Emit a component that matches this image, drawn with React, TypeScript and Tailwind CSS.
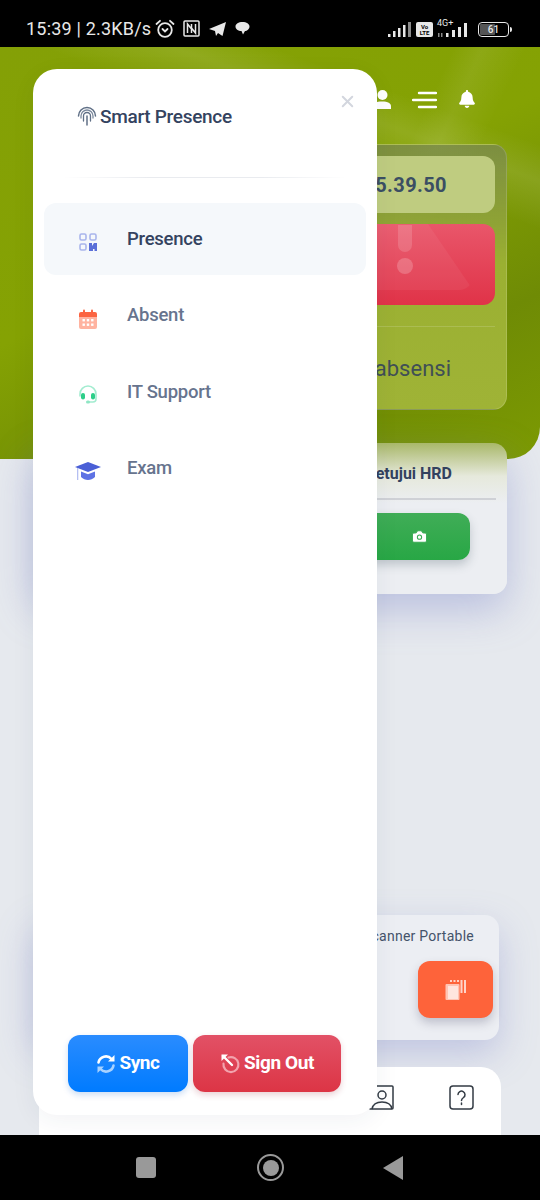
import { Camera, X } from "lucide-react";
import { FaBell } from "react-icons/fa";

const menu = [
  { title: "Presence", icon: PresenceIcon, active: true },
  { title: "Absent", icon: CalendarIcon },
  { title: "IT Support", icon: HeadsetIcon },
  { title: "Exam", icon: CapIcon },
];

function PresenceIcon() {
  return (
    <svg width="18" height="18" viewBox="0 0 18 18">
      <g fill="none" stroke="#a9b5ec" strokeWidth="1.6">
        <rect x="1" y="1" width="6" height="6" rx="1.5" />
        <rect x="11" y="1" width="6" height="6" rx="1.5" />
        <rect x="1" y="11" width="6" height="6" rx="1.5" />
      </g>
      <path d="M10 10h3v3l2-3h3v8h-2.5v-2H14v2h-4z" fill="#5a6fd8" />
    </svg>
  );
}

function CalendarIcon() {
  return (
    <svg width="18" height="20" viewBox="0 0 18 20">
      <path d="M0 8h18v10a2 2 0 0 1-2 2H2a2 2 0 0 1-2-2z" fill="#ffb3a0" />
      <path d="M2 3h14a2 2 0 0 1 2 2v3H0V5a2 2 0 0 1 2-2z" fill="#fb6340" />
      <rect x="4" y="0.5" width="2" height="4" rx="1" fill="#fb6340" />
      <rect x="12" y="0.5" width="2" height="4" rx="1" fill="#fb6340" />
      <g fill="#fff">
        <rect x="3.5" y="10" width="2.4" height="2.4" />
        <rect x="7.8" y="10" width="2.4" height="2.4" />
        <rect x="12.1" y="10" width="2.4" height="2.4" />
        <rect x="3.5" y="14.5" width="2.4" height="2.4" />
        <rect x="7.8" y="14.5" width="2.4" height="2.4" />
        <rect x="12.1" y="14.5" width="2.4" height="2.4" />
      </g>
    </svg>
  );
}

function HeadsetIcon() {
  return (
    <svg width="20" height="20" viewBox="0 0 20 20" fill="none">
      <path d="M2 11V9a8 8 0 0 1 16 0v5a3 3 0 0 1-3 3h-4" stroke="#a3ecd0" strokeWidth="1.6" strokeLinecap="round" />
      <rect x="3" y="8" width="4" height="6.5" rx="2" fill="#2dce89" />
      <rect x="13" y="8" width="4" height="6.5" rx="2" fill="#2dce89" />
      <rect x="8" y="15.5" width="4" height="3" rx="1.5" fill="#8fe6c4" />
    </svg>
  );
}

function CapIcon() {
  return (
    <svg width="26" height="20" viewBox="0 0 26 20">
      <path d="M13 0l13 5-13 5L0 5z" fill="#4a5fd6" />
      <path d="M6 9.5l7 2.8 7-2.8V15c-2 2-4.5 3-7 3s-5-1-7-3z" fill="#5e72e4" />
      <rect x="2" y="6" width="1.3" height="12" fill="#b5bff2" />
    </svg>
  );
}

function FingerprintIcon() {
  return (
    <svg width="20" height="20" viewBox="0 0 20 20" fill="none" stroke="#5f6f86" strokeLinecap="round">
      <path d="M1.5 10a8.5 8.5 0 0 1 17 0" strokeWidth="1.5" />
      <path d="M4 12V10a6 6 0 0 1 12 0v2" strokeWidth="1.3" stroke="#7c8a9e" />
      <path d="M6.5 15v-5a3.5 3.5 0 0 1 7 0v5" strokeWidth="1.3" />
      <path d="M10 19v-9" strokeWidth="1.5" />
    </svg>
  );
}

function SyncIcon() {
  return (
    <svg width="20" height="20" viewBox="0 0 20 20" fill="none" strokeWidth="2.6" strokeLinecap="round">
      <path d="M2.5 8.5A7.5 7.5 0 0 1 15.5 5" stroke="#fff" />
      <path d="M18.5 1v6.5H12z" fill="#fff" />
      <path d="M17.5 11.5A7.5 7.5 0 0 1 4.5 15" stroke="#a8d2ff" />
      <path d="M1.5 19v-6.5H8z" fill="#a8d2ff" />
    </svg>
  );
}

function SignOutIcon() {
  return (
    <svg width="21" height="21" viewBox="0 0 21 21" fill="none">
      <path d="M8.5 4.5a7.5 7.5 0 1 1-5 6" stroke="#f2a3ad" strokeWidth="2.2" strokeLinecap="round" />
      <path d="M12 12L3 3" stroke="#fff" strokeWidth="2.4" strokeLinecap="round" />
      <path d="M1.5 1.5h6.5L1.5 8z" fill="#fff" />
    </svg>
  );
}

function ScanIcon() {
  return (
    <svg width="21" height="21" viewBox="0 0 21 21">
      <rect x="0.5" y="5" width="14" height="16" rx="1" fill="#ffc4b4" />
      <rect x="3" y="7" width="10" height="13" fill="#ffe5de" />
      <g fill="#ffd3c7">
        <rect x="5" y="1" width="2" height="2" />
        <rect x="8.5" y="1" width="2" height="2" />
        <rect x="12" y="1" width="2" height="2" />
        <rect x="15.5" y="1" width="2" height="13" />
        <rect x="19" y="1" width="2" height="13" />
      </g>
    </svg>
  );
}

function StatusBar() {
  return (
    <div className="flex h-[47px] shrink-0 items-center justify-between bg-black pl-[26px] pr-[28px] pt-[10px] text-[#e8e8e8]">
      <div className="flex items-center">
        <span className="text-[18px] leading-none tracking-[0.2px]">15:39 | 2.3KB/s</span>
        <svg className="ml-[4px]" width="20" height="20" viewBox="0 0 20 20" fill="none" stroke="currentColor" strokeWidth="1.8">
          <circle cx="10" cy="11" r="6.8" />
          <path d="M1.5 5L5 1.8M18.5 5L15 1.8M7.5 10l2.5 2.5 2.5-2.5" strokeLinecap="round" />
        </svg>
        <svg className="ml-[8px]" width="17" height="17" viewBox="0 0 17 17" fill="none" stroke="currentColor" strokeWidth="1.5">
          <rect x="1" y="1" width="15" height="15" rx="1" />
          <path d="M4.5 13V4l4 5M12.5 4v9l-4-5M8.5 4v9" />
        </svg>
        <svg className="ml-[9px]" width="17" height="16" viewBox="0 0 17 16" fill="currentColor">
          <path d="M17 1L13.5 15l-4.5-3-2 3-1-5L0 8z" />
        </svg>
        <svg className="ml-[9px]" width="15" height="15" viewBox="0 0 15 15" fill="currentColor">
          <path d="M7.5 1c4 0 7 2 7 4.5S12 10 10 10l-2 3.5L6.5 10C3 10 .5 8 .5 5.5S3.5 1 7.5 1z" />
        </svg>
      </div>
      <div className="flex items-end">
        <svg width="24" height="15" viewBox="0 0 24 15" fill="currentColor">
          <rect x="0" y="12" width="2.5" height="3" />
          <rect x="5" y="9" width="2.5" height="6" />
          <rect x="10" y="6" width="2.5" height="9" />
          <rect x="15" y="3" width="2.5" height="12" />
          <rect x="20" y="0" width="3" height="15" fill="#8a8a8a" />
        </svg>
        <div className="ml-[4px] flex h-[15px] w-[17px] flex-col items-center justify-center rounded-[2px] bg-[#e8e8e8] text-[6px] font-bold leading-[6px] text-black">
          <span>Vo</span>
          <span>LTE</span>
        </div>
        <div className="relative ml-[4px] h-[17px] w-[34px]">
          <span className="absolute left-0 top-[-1px] text-[9px] leading-none">4G+</span>
          <svg className="absolute bottom-0 right-0" width="34" height="15" viewBox="0 0 34 15" fill="currentColor">
            <rect x="9" y="11" width="2.5" height="4" />
            <rect x="15" y="8" width="3" height="7" />
            <rect x="21" y="5" width="3" height="10" />
            <rect x="27" y="1" width="3" height="14" />
            <rect x="1" y="11" width="1.5" height="4" fill="#8a8a8a" />
            <rect x="4" y="11" width="1.5" height="4" fill="#8a8a8a" />
          </svg>
        </div>
        <div className="ml-[7px] flex items-center">
          <div className="relative flex h-[15px] w-[31px] items-center justify-center overflow-hidden rounded-[4px] border-[1.5px] border-[#e8e8e8] text-[10px] font-medium leading-none">
            <span className="absolute inset-y-[1px] left-[1px] w-[15px] rounded-[1px] bg-[#555]" />
            <span className="relative">61</span>
          </div>
          <span className="ml-[1px] h-[5px] w-[2px] rounded-r-sm bg-[#e8e8e8]" />
        </div>
      </div>
    </div>
  );
}

function Background() {
  return (
    <div className="flex flex-1 flex-col overflow-hidden bg-[#e6e9ee]">
      <section className="h-[412px] shrink-0 rounded-br-[32px] bg-[linear-gradient(115deg,transparent_62%,rgba(255,255,255,0.07)_66%,transparent_72%),linear-gradient(20deg,transparent_70%,rgba(255,255,255,0.1)_78%,transparent_84%),linear-gradient(155deg,#84a006_0%,#85a203_45%,#6f8b05_75%,#7c9a02_100%)] pl-[45px] pr-[33px]">
        <div className="flex h-[97px] items-start justify-end gap-[21px] pr-[31px] pt-[43px] text-white">
          <svg width="18" height="19" viewBox="0 0 18 19" fill="#fff">
            <circle cx="9.5" cy="5" r="5" />
            <path d="M0 19v-2.5C0 13 3 11.5 9 11.5s9 1.5 9 5V19z" />
          </svg>
          <svg className="mt-[1px]" width="25" height="18" viewBox="0 0 25 18" stroke="#fff" strokeWidth="2.4" strokeLinecap="round">
            <path d="M7 2h17M1 9h23M7 16h17" />
          </svg>
          <FaBell size={18} />
        </div>
        <div className="rounded-[14px] border border-white/15 bg-[linear-gradient(180deg,rgba(120,135,80,0.75),#9bb032_45%,#9fb336)] px-[11px] pt-[11px]">
          <div className="flex h-[57px] items-center justify-end rounded-[12px] bg-[#bfcc80] pr-[48px] text-[20px] font-bold tracking-[0.4px] text-[#3b4e63]">
            15.39.50
          </div>
          <div className="relative mt-[11px] h-[81px] overflow-hidden rounded-[12px] bg-[linear-gradient(180deg,#e9566a,#e03348)]">
            <div className="absolute right-[22px] top-0 h-[66px] w-[150px] rounded-br-[14px] bg-white/[0.05] [clip-path:polygon(0_0,70%_0,100%_100%,0_100%)]" />
            <div className="absolute right-[83px] top-[1px] h-[27px] w-[14px] rounded-b-full bg-white/15" />
            <div className="absolute right-[82px] top-[34px] h-[16px] w-[16px] rounded-full bg-white/20" />
          </div>
          <div className="mt-[21px] h-px bg-white/15" />
          <div className="flex h-[82px] items-center justify-end pr-[44px] text-[22px] text-[#404f55]">
            Belum absensi
          </div>
        </div>
      </section>

      <section className="relative z-[1] -mt-[16px] ml-[33px] mr-[33px] flex h-[151px] flex-col rounded-[14px] bg-[linear-gradient(180deg,#a9b86a_0%,#e6e9dc_22%,#eceef2_40%,#eceef2_100%)] px-[11px] shadow-[0_16px_40px_rgba(120,130,200,0.4)]">
        <div className="flex h-[57px] items-center justify-end border-b-2 border-[#cfd1d6] pr-[44px] pt-[6px] text-[16px] font-bold text-[#33415f]">
          Disetujui HRD
        </div>
        <div className="mr-[26px] mt-[13px] flex h-[47px] items-center justify-end rounded-[12px] bg-[linear-gradient(180deg,#40ad57,#28a745)] pr-[42px] text-white shadow-[0_5px_10px_rgba(60,80,90,0.25)]">
          <Camera size={17} fill="#fff" stroke="#3aab54" strokeWidth={1.5} />
        </div>
      </section>

      <section className="mt-[321px] ml-[33px] mr-[41px] h-[125px] rounded-[14px] bg-[#eceef3] pr-[6px] shadow-[0_14px_36px_rgba(120,130,200,0.35)]">
        <p className="pt-[11px] pr-[19px] text-right text-[14px] tracking-[0.25px] text-[#44536a]">Scanner Portable</p>
        <div className="ml-auto mt-[14px] flex h-[57px] w-[75px] items-center justify-center rounded-[12px] bg-[#fe633a] shadow-[0_5px_10px_rgba(60,60,90,0.25)]">
          <ScanIcon />
        </div>
      </section>

      <nav className="mt-[27px] ml-[39px] mr-[39px] flex h-[68px] flex-1 items-start justify-end gap-[55px] rounded-t-[20px] bg-white pr-[27px] pt-[18px] text-[#333]">
        <svg width="25" height="25" viewBox="0 0 25 25" fill="none" stroke="#333b44" strokeWidth="1.5">
          <path d="M4 1h19a1 1 0 0 1 1 1v21a1 1 0 0 1-1 1H1" strokeLinecap="round" />
          <circle cx="13" cy="10" r="4" />
          <path d="M3 24c1-5 5-7 10-7s9 2 10 7" />
        </svg>
        <svg width="25" height="25" viewBox="0 0 25 25" fill="none" stroke="#333b44" strokeWidth="1.5">
          <rect x="1" y="1" width="23" height="23" rx="3" />
          <path d="M9 9.5a3.5 3.5 0 1 1 5.5 3c-1.3.9-2 1.5-2 3" strokeLinecap="round" />
          <path d="M12.5 18v1.5" strokeLinecap="round" />
        </svg>
      </nav>
    </div>
  );
}

function Drawer() {
  return (
    <aside className="absolute left-[33px] top-[69px] z-10 flex h-[1046px] w-[344px] flex-col rounded-[24px] bg-white font-[Roboto,sans-serif] shadow-[0_6px_24px_rgba(40,50,80,0.06)]">
      <header className="relative flex h-[108px] shrink-0 items-start pl-[44px] pt-[37px]">
        <FingerprintIcon />
        <span className="ml-[3px] text-[19px] font-medium leading-[22px] tracking-[-0.3px] text-[#34435f]">Smart Presence</span>
        <X className="absolute right-[20px] top-[23px]" size={19} stroke="#d3d6de" strokeWidth={2.5} />
      </header>
      <div className="mx-[30px] h-px bg-[linear-gradient(90deg,transparent,#e9ebef_30%,#e9ebef_70%,transparent)]" />
      <ul className="mt-[25px] flex flex-col gap-[4.5px] px-[11px]">
        {menu.map((item) => {
          const Icon = item.icon;
          return (
            <li
              key={item.title}
              className={
                item.active
                  ? "flex h-[72px] items-center rounded-[12px] bg-[#f5f8fb] text-[#34435f] font-medium"
                  : "flex h-[72px] items-center rounded-[12px] text-[#67748e] font-medium"
              }
            >
              <span className="flex w-[83px] shrink-0 justify-center pl-[4px] pt-[6px]">
                <Icon />
              </span>
              <span className="text-[18.5px] leading-none tracking-[-0.25px]">{item.title}</span>
            </li>
          );
        })}
      </ul>
      <div className="mt-auto flex gap-[5px] pb-[23px] pl-[35px]">
        <button className="flex h-[57px] w-[120px] items-center justify-center gap-[3px] rounded-[12px] bg-[linear-gradient(180deg,#2a8cff,#007bff)] text-[19px] font-bold tracking-[-0.4px] text-white shadow-[0_3px_6px_rgba(0,90,200,0.2)]">
          <SyncIcon />
          Sync
        </button>
        <button className="flex h-[57px] w-[148px] items-center justify-center gap-[3px] rounded-[12px] bg-[linear-gradient(180deg,#e25166,#dc3545)] text-[19px] font-bold tracking-[-0.4px] text-white shadow-[0_3px_6px_rgba(150,30,50,0.2)]">
          <SignOutIcon />
          Sign Out
        </button>
      </div>
    </aside>
  );
}

export default function App() {
  return (
    <div className="relative flex h-[1200px] w-[540px] flex-col overflow-hidden bg-black font-[Roboto,sans-serif]">
      <StatusBar />
      <Background />
      <div className="flex h-[65px] shrink-0 items-center bg-black">
        <span className="ml-[136px] h-[21px] w-[20px] rounded-[3px] bg-[#999]" />
        <span className="ml-[101px] flex h-[27px] w-[27px] items-center justify-center rounded-full border-[2.5px] border-[#999]">
          <span className="h-[16px] w-[16px] rounded-full bg-[#999]" />
        </span>
        <svg className="ml-[99px]" width="20" height="24" viewBox="0 0 20 24" fill="#999">
          <path d="M20 0v24L0 12z" />
        </svg>
      </div>
      <Drawer />
    </div>
  );
}
